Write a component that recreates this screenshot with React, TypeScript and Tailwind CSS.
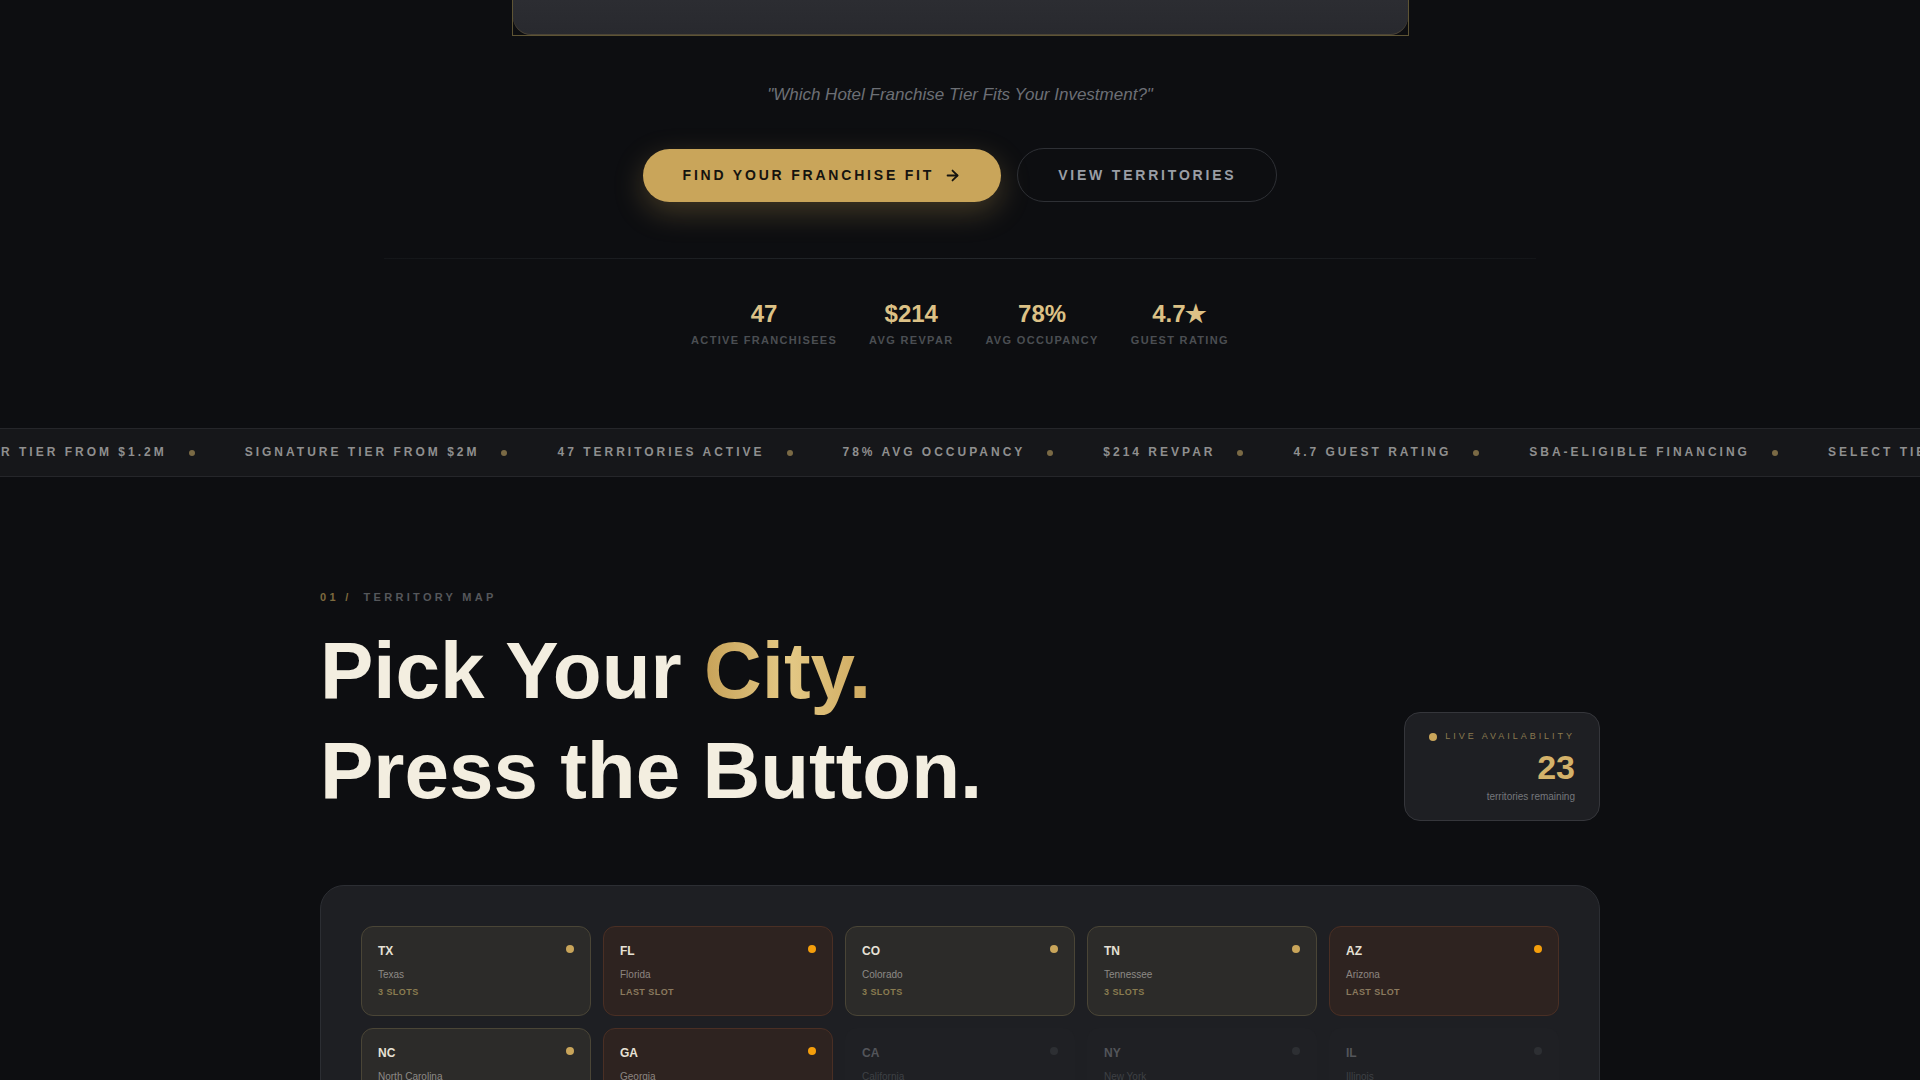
import { ArrowRight } from "lucide-react";

type Status = "open" | "last" | "sold";

const stats = [
  { value: "47", label: "Active Franchisees" },
  { value: "$214", label: "Avg RevPAR" },
  { value: "78%", label: "Avg Occupancy" },
  { value: "4.7★", label: "Guest Rating" },
];

const tickerItems = [
  "Premier Tier from $1.2M",
  "Signature Tier from $2M",
  "47 Territories Active",
  "78% Avg Occupancy",
  "$214 RevPAR",
  "4.7 Guest Rating",
  "SBA-Eligible Financing",
  "Select Tier from $750K",
];

const states: { code: string; name: string; status: Status; note: string }[] = [
  { code: "TX", name: "Texas", status: "open", note: "3 Slots" },
  { code: "FL", name: "Florida", status: "last", note: "Last Slot" },
  { code: "CO", name: "Colorado", status: "open", note: "3 Slots" },
  { code: "TN", name: "Tennessee", status: "open", note: "3 Slots" },
  { code: "AZ", name: "Arizona", status: "last", note: "Last Slot" },
  { code: "NC", name: "North Carolina", status: "open", note: "2 Slots" },
  { code: "GA", name: "Georgia", status: "last", note: "Last Slot" },
  { code: "CA", name: "California", status: "sold", note: "Sold Out" },
  { code: "NY", name: "New York", status: "sold", note: "Sold Out" },
  { code: "IL", name: "Illinois", status: "sold", note: "Sold Out" },
];

const cardStyles: Record<Status, { box: string; code: string; name: string; note: string; dot: string }> = {
  open: {
    box: "bg-[#2c2b29] border-[#4a4536]",
    code: "text-[#e6e1d5]",
    name: "text-[#8c8a86]",
    note: "text-[#8a7c50]",
    dot: "bg-[#c9a55a]",
  },
  last: {
    box: "bg-[#2e2320] border-[#4a2f24]",
    code: "text-[#e6e1d5]",
    name: "text-[#8c8581]",
    note: "text-[#8b7a5e]",
    dot: "bg-[#f59e0b]",
  },
  sold: {
    box: "bg-[#1f2024] border-transparent",
    code: "text-[#53555a]",
    name: "text-[#3e4045]",
    note: "text-[#36383c]",
    dot: "bg-[#2d2f33]",
  },
};

function StateCard({ code, name, status, note }: { code: string; name: string; status: Status; note: string }) {
  const s = cardStyles[status];
  return (
    <div className={`rounded-xl border p-4 ${s.box}`}>
      <div className="flex items-start justify-between">
        <span className={`text-[12px] leading-4 font-bold ${s.code}`}>{code}</span>
        <span className={`mt-0.5 size-2 rounded-full ${s.dot}`} />
      </div>
      <div className={`mt-2 text-[10px] leading-[15px] ${s.name}`}>{name}</div>
      <div className={`mt-1 text-[9px] leading-[13px] font-bold uppercase tracking-[0.05em] ${s.note}`}>{note}</div>
    </div>
  );
}

function Ticker() {
  const items = [...tickerItems, ...tickerItems];
  return (
    <div className="w-full overflow-hidden border-y border-[#25262a] bg-[#16171a] py-4">
      <div className="flex w-max -translate-x-[63px] items-center gap-[50px]">
        {items.map((t, i) => (
          <div key={i} className="flex items-center gap-[22px]">
            <span className="whitespace-nowrap text-[12px] leading-[15px] font-bold uppercase tracking-[0.25em] text-[#8f8f8f]">
              {t}
            </span>
            <span className="size-1.5 rounded-full bg-[#7a6a45]" />
          </div>
        ))}
      </div>
    </div>
  );
}

export default function App() {
  return (
    <div className="min-h-screen bg-[#0d0e11] font-['Liberation_Sans',Arial,sans-serif] text-white">
      {/* hero tail */}
      <section className="flex flex-col items-center pb-20">
        <div className="w-[897px] border-x border-b border-[#5e5434]">
          <div className="h-[35px] rounded-b-[18px] bg-gradient-to-b from-[#2c2d32] to-[#28292e] shadow-[inset_0_-1px_0_rgba(201,165,90,0.22)]" />
        </div>

        <p className="mt-[45px] text-[17px] leading-7 italic text-[#6c6f75]">
          "Which Hotel Franchise Tier Fits Your Investment?"
        </p>

        <div className="mt-[39px] flex items-center gap-4">
          <button className="flex items-center gap-2.5 rounded-full bg-[#c9a55a] px-10 py-[18px] text-[14px] leading-4 font-bold uppercase tracking-[0.2em] text-[#15130f] shadow-[0_10px_30px_rgba(201,165,90,0.28)]">
            Find Your Franchise Fit
            <ArrowRight size={17} strokeWidth={2.5} />
          </button>
          <button className="rounded-full border border-[#2e3035] px-10 py-[18px] text-[14px] leading-4 font-bold uppercase tracking-[0.2em] text-[#9a9ea5]">
            View Territories
          </button>
        </div>

        <div className="mt-14 h-px w-full max-w-6xl bg-gradient-to-r from-[#141619] via-[#24272b] to-[#141619]" />

        <div className="mt-[39px] flex gap-8">
          {stats.map((s) => (
            <div key={s.label} className="flex flex-col items-center">
              <span className="text-[24px] leading-8 font-bold text-[#dcc186]">{s.value}</span>
              <span className="mt-0.5 text-[11px] leading-4 font-bold uppercase tracking-[0.12em] text-[#4b4e53]">
                {s.label}
              </span>
            </div>
          ))}
        </div>
      </section>

      <Ticker />

      {/* territory map */}
      <section className="mx-auto max-w-7xl pt-28 pb-24">
        <div className="flex items-end justify-between">
          <div>
            <div className="flex items-center gap-3 text-[11px] leading-4 font-bold uppercase tracking-[0.3em]">
              <span className="text-[#7d6a3e]">01 /</span>
              <span className="text-[#55575b]">Territory Map</span>
            </div>
            <h2 className="mt-4 text-[80px] leading-[100px] font-bold text-[#f3eee0]">
              Pick Your{" "}
              <span className="bg-gradient-to-r from-[#c7a258] via-[#e4c986] to-[#cfa95e] bg-clip-text text-transparent">
                City.
              </span>
              <br />
              Press the Button.
            </h2>
          </div>

          <div className="flex flex-col items-end rounded-2xl border border-[#35363b] bg-[#1e1f23] px-6 pt-[18px] pb-4">
            <div className="flex items-center gap-2">
              <span className="size-2 rounded-full bg-[#c9a55a]" />
              <span className="text-[9px] leading-[11px] uppercase tracking-[0.33em] text-[#8a7a50]">
                Live Availability
              </span>
            </div>
            <span className="mt-2 text-[34px] leading-[34px] font-bold text-[#d4b26a]">23</span>
            <span className="mt-1.5 text-[10px] leading-[14px] text-[#75777c]">territories remaining</span>
          </div>
        </div>

        <div className="mt-16 rounded-3xl border border-[#2c2e33] bg-[#1e1f23] p-10">
          <div className="grid grid-cols-5 gap-3">
            {states.map((st) => (
              <StateCard key={st.code} {...st} />
            ))}
          </div>
        </div>
      </section>
    </div>
  );
}
